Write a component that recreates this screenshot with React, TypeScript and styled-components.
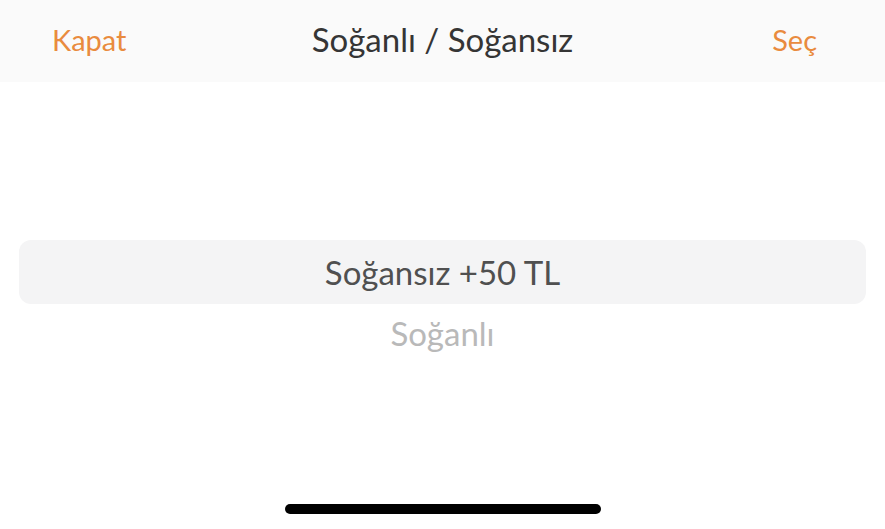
import React from "react";
import styled, { createGlobalStyle } from "styled-components";

const Global = createGlobalStyle`
  html, body { margin: 0; padding: 0; background: #ffffff; }
  body { font-family: Lato, "Noto Sans", sans-serif; }
`;

const Screen = styled.div`
  width: 885px;
  height: 529px;
  display: flex;
  flex-direction: column;
  background: #ffffff;
  overflow: hidden;
`;

const Header = styled.div`
  height: 82px;
  display: grid;
  grid-template-columns: 1fr auto 1fr;
  align-items: center;
  padding: 0 52px;
  background: #fafafa;
`;

const HeaderButton = styled.button<{ $align: "start" | "end" }>`
  justify-self: ${(p) => p.$align};
  background: none;
  border: none;
  padding: 0 ${(p) => (p.$align === "end" ? "16px" : "0")} 0 0;
  margin-top: -4px;
  font-family: Lato, sans-serif;
  font-size: 29px;
  color: #e98b3e;
  cursor: pointer;
`;

const Title = styled.h1`
  margin: 0;
  margin-top: -4px;
  font-family: Lato, sans-serif;
  font-weight: 400;
  font-size: 33px;
  color: #353535;
`;

const Picker = styled.div`
  flex: 1;
  display: flex;
  flex-direction: column;
  align-items: stretch;
  padding: 158px 19px 0 19px;
`;

const Option = styled.div<{ $selected?: boolean }>`
  height: ${(p) => (p.$selected ? "64px" : "58px")};
  display: flex;
  align-items: center;
  justify-content: center;
  border-radius: 12px;
  background: ${(p) => (p.$selected ? "#f4f4f5" : "transparent")};
  font-family: Lato, sans-serif;
  font-size: 33px;
  color: ${(p) => (p.$selected ? "#505050" : "#b9b9b9")};
`;

const HomeBar = styled.div`
  align-self: center;
  width: 316px;
  height: 10px;
  border-radius: 5px;
  background: #000000;
  margin-bottom: 15px;
`;

export default function App() {
  return (
    <Screen>
      <Global />
      <Header>
        <HeaderButton $align="start">Kapat</HeaderButton>
        <Title>Soğanlı / Soğansız</Title>
        <HeaderButton $align="end">Seç</HeaderButton>
      </Header>
      <Picker>
        <Option $selected>Soğansız +50 TL</Option>
        <Option>Soğanlı</Option>
      </Picker>
      <HomeBar />
    </Screen>
  );
}
